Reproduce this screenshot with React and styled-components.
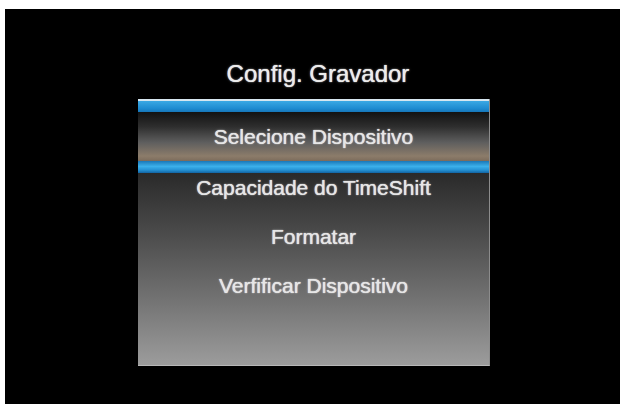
import React from "react";
import styled, { createGlobalStyle } from "styled-components";

const GlobalStyle = createGlobalStyle`
  html, body {
    margin: 0;
    padding: 0;
    background: #fff;
  }
  body {
    font-family: "Liberation Sans", Arial, sans-serif;
  }
`;

const Screen = styled.div`
  margin: 9px 0 0 5px;
  width: 615px;
  height: 395px;
  background: #000;
  display: flex;
  flex-direction: column;
  padding: 51px 0 0 133px;
  box-sizing: border-box;
`;

const Column = styled.div`
  width: 352px;
  display: flex;
  flex-direction: column;
`;

const Title = styled.h1`
  margin: 0 0 11px;
  padding-left: 8px;
  font-size: 24px;
  line-height: 28px;
  font-weight: normal;
  text-align: center;
  color: #ececec;
  text-shadow: 0 0 1px #fff, 0 0 3px rgba(255, 255, 255, 0.3);
`;

const MenuBox = styled.div`
  height: 267px;
  box-sizing: border-box;
  display: flex;
  flex-direction: column;
  background: linear-gradient(
    to bottom,
    #1e1e1e 0%,
    #2a2a2a 28%,
    #4a4a4a 50%,
    #727272 75%,
    #9c9c9c 100%
  );
  border-bottom: 1px solid #b8b8b8;
  border-right: 1px solid #8c8c8c;
`;

const TopBar = styled.div`
  height: 13px;
  border-top: 2px solid #d6e6f0;
  box-sizing: border-box;
  background: linear-gradient(to bottom, #3aa8e4, #1d8ad0 70%, #1676b8);
`;

const BottomBar = styled.div`
  height: 12px;
  background: linear-gradient(
    to bottom,
    #1a78b8 0%,
    #3cb0ea 45%,
    #2592d4 75%,
    #1264a2 100%
  );
`;

const Selected = styled.div`
  display: flex;
  flex-direction: column;
  margin-bottom: -10px;
`;

const Item = styled.div`
  height: 49px;
  line-height: 49px;
  text-align: center;
  font-size: 21px;
  color: #e6e6e6;
  text-shadow: 0 0 1px #fff, 0 0 3px rgba(255, 255, 255, 0.25);
  background: ${props =>
    props.active
      ? "linear-gradient(to bottom, #121212 0%, #2e2e2e 30%, #5e5e5e 62%, #8c7c6a 90%, #7c6c5c 100%)"
      : "transparent"};
`;

const items = [
  "Capacidade do TimeShift",
  "Formatar",
  "Verfificar Dispositivo",
];

const App = () => {
  return (
    <>
      <GlobalStyle />
      <Screen>
        <Column>
          <Title>Config. Gravador</Title>
          <MenuBox>
            <Selected>
              <TopBar />
              <Item active>Selecione Dispositivo</Item>
              <BottomBar />
            </Selected>
            {items.map(label => (
              <Item key={label}>{label}</Item>
            ))}
          </MenuBox>
        </Column>
      </Screen>
    </>
  );
};

export default App;
